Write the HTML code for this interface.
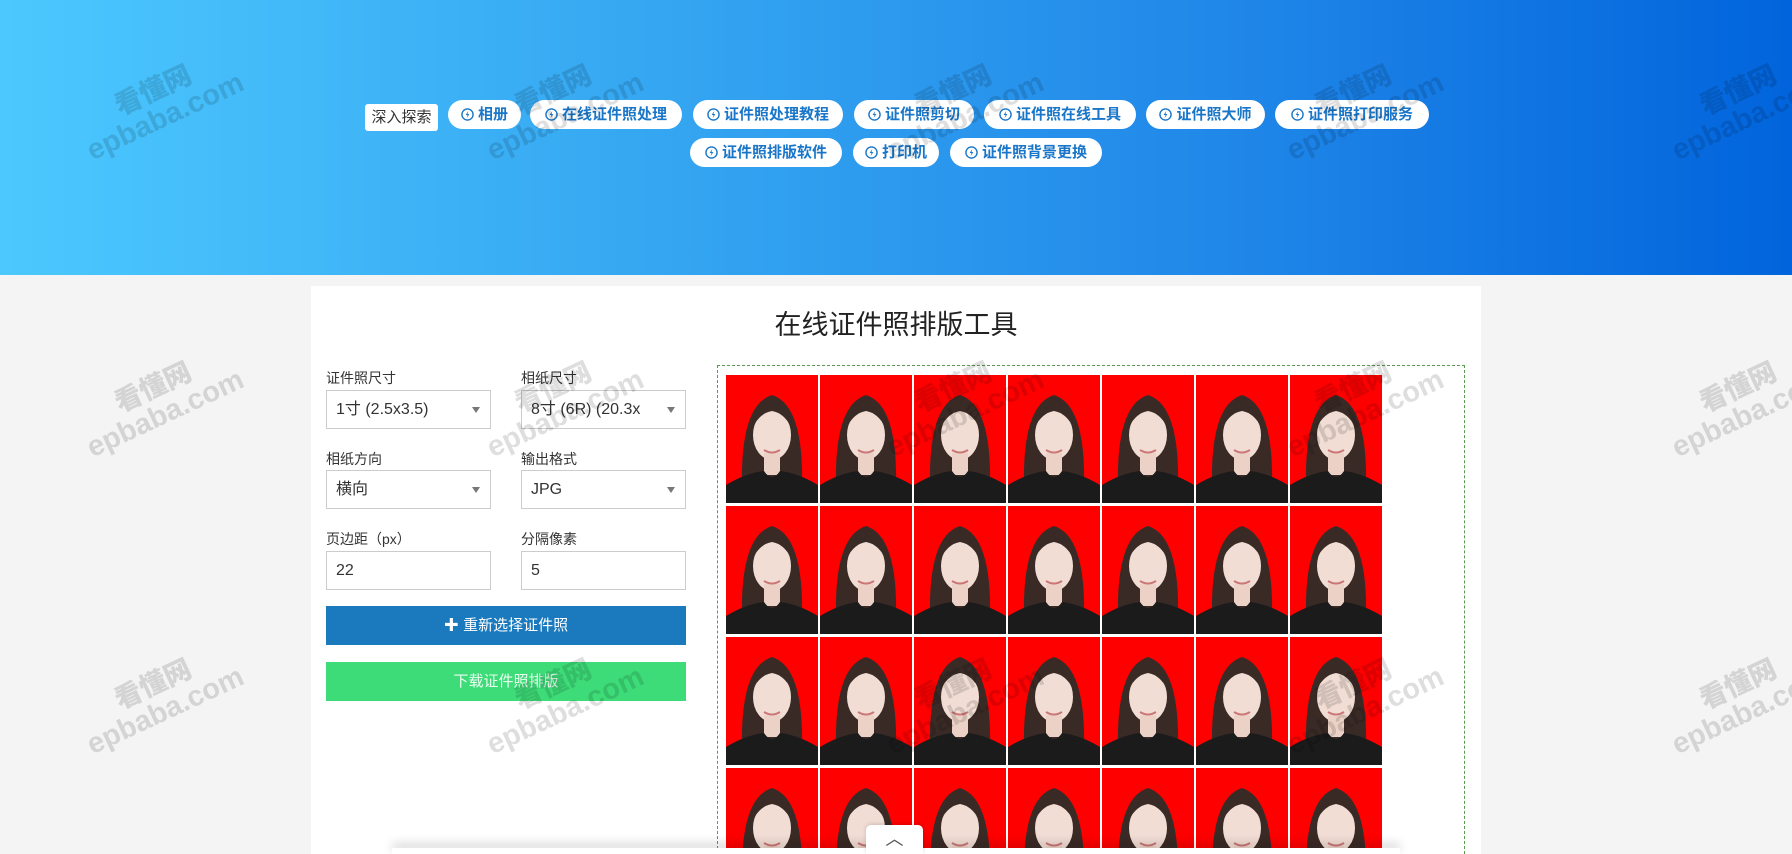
<!DOCTYPE html>
<html><head><meta charset="utf-8"><style>
*{box-sizing:border-box;margin:0;padding:0}
html{width:1792px;height:854px;overflow:hidden}
body{width:1792px;height:854px;overflow:hidden;background:#f4f4f4;font-family:"Liberation Sans","Noto Sans CJK SC",sans-serif;position:relative}
.hdr{position:absolute;left:0;top:0;width:1792px;height:275px;background:linear-gradient(90deg,#4cc8fe 0%,#36a8f2 35%,#1f86e8 70%,#0164dc 100%)}
.tag{position:absolute;height:29px;border-radius:15px;background:#fff;color:#1976c8;font-size:15px;font-weight:bold;line-height:29px;text-align:center;white-space:nowrap}
.tag svg{display:inline-block;width:13px;height:13px;margin-right:4px;vertical-align:-2px}
.lab{position:absolute;left:365px;top:104px;width:73px;height:27px;background:#fff;border-radius:3px;font-size:15px;line-height:27px;text-align:center;color:#333}
.card{position:absolute;left:311px;top:286px;width:1170px;height:568px;background:#fff}
h1{position:absolute;left:311px;width:1170px;top:303px;text-align:center;font-size:27px;font-weight:normal;color:#222}
.l{position:absolute;font-size:14px;color:#333}
.s{position:absolute;width:165px;height:39px;border:1px solid #ccc;font-size:16px;color:#333;line-height:37px;padding-left:9px;background:#fff}
.s.d:after{content:"";position:absolute;right:10px;top:16px;border:4px solid transparent;border-top:6px solid #777}
.btn{position:absolute;left:326px;width:360px;height:39px;color:#fff;font-size:15px;line-height:39px;text-align:center}
.prev{position:absolute;left:717px;top:365px;width:748px;height:489px;border:1px dashed #5a9a50;border-bottom:none}
.wm{position:absolute;color:rgba(0,0,0,.13);font-weight:bold;transform:rotate(-25deg);text-align:center;line-height:1.05}
.wm b{display:block;font-size:27px}.wm span{display:block;font-size:29px}
.bar{position:absolute;left:392px;top:848px;width:1008px;height:6px;background:#fff;box-shadow:0 -4px 10px rgba(0,0,0,.2)}
.up{position:absolute;left:866px;top:825px;width:57px;height:29px;background:#fff;border-radius:5px 5px 0 0;box-shadow:0 -1px 4px rgba(0,0,0,.15);text-align:center;color:#555;font-size:18px;line-height:28px}
</style></head><body>
<svg width="0" height="0" style="position:absolute"><defs><symbol id="ic" viewBox="0 0 14 14"><circle cx="7" cy="7" r="6" fill="none" stroke="#1976c8" stroke-width="1.5"/><path d="M7.8 3.2 L5 7.6 H7 L6.2 10.8 L9 6.4 H7 Z" fill="#1976c8"/></symbol></defs></svg>
<div class="hdr"></div>
<div class="lab">深入探索</div>
<div class="tag" style="left:448px;top:100px;width:73px"><svg><use href="#ic"/></svg>相册</div>
<div class="tag" style="left:530px;top:100px;width:152px"><svg><use href="#ic"/></svg>在线证件照处理</div>
<div class="tag" style="left:693px;top:100px;width:150px"><svg><use href="#ic"/></svg>证件照处理教程</div>
<div class="tag" style="left:854px;top:100px;width:120px"><svg><use href="#ic"/></svg>证件照剪切</div>
<div class="tag" style="left:984px;top:100px;width:152px"><svg><use href="#ic"/></svg>证件照在线工具</div>
<div class="tag" style="left:1146px;top:100px;width:119px"><svg><use href="#ic"/></svg>证件照大师</div>
<div class="tag" style="left:1275px;top:100px;width:154px"><svg><use href="#ic"/></svg>证件照打印服务</div>
<div class="tag" style="left:690px;top:138px;width:152px"><svg><use href="#ic"/></svg>证件照排版软件</div>
<div class="tag" style="left:853px;top:138px;width:86px"><svg><use href="#ic"/></svg>打印机</div>
<div class="tag" style="left:950px;top:138px;width:152px"><svg><use href="#ic"/></svg>证件照背景更换</div>

<div class="card"></div>
<h1>在线证件照排版工具</h1>
<div class="l" style="left:326px;top:368px">证件照尺寸</div>
<div class="l" style="left:521px;top:368px">相纸尺寸</div>
<div class="s d" style="left:326px;top:390px">1寸 (2.5x3.5)</div>
<div class="s d" style="left:521px;top:390px">8寸 (6R) (20.3x</div>
<div class="l" style="left:326px;top:449px">相纸方向</div>
<div class="l" style="left:521px;top:449px">输出格式</div>
<div class="s d" style="left:326px;top:470px">横向</div>
<div class="s d" style="left:521px;top:470px">JPG</div>
<div class="l" style="left:326px;top:529px">页边距（px）</div>
<div class="l" style="left:521px;top:529px">分隔像素</div>
<div class="s" style="left:326px;top:551px">22</div>
<div class="s" style="left:521px;top:551px">5</div>
<div class="btn" style="top:606px;background:#1a7abd">✚ 重新选择证件照</div>
<div class="btn" style="top:662px;background:#3ddc78;color:#e8fff0">下载证件照排版</div>

<div class="prev"></div>
<svg style="position:absolute;left:726px;top:375px" width="658" height="479">
<defs><pattern id="p" width="94" height="131" patternUnits="userSpaceOnUse">
<rect width="92" height="128" fill="#fe0000"/>
<path d="M16 112 Q14 30 46 20 Q78 30 76 112 Z" fill="#3a2a26"/>
<ellipse cx="46" cy="60" rx="19" ry="25" fill="#f1ddd4"/>
<rect x="38" y="78" width="16" height="22" fill="#ecd2c6"/>
<path d="M0 128 L0 110 Q20 98 38 96 Q46 108 54 96 Q72 98 92 110 L92 128 Z" fill="#1b1b1b"/>
<path d="M27 52 Q30 30 46 28 Q62 30 65 52 Q58 38 46 36 Q34 38 27 52Z" fill="#3a2a26"/>
<path d="M38 75 Q46 80 54 75" stroke="#c77" stroke-width="2" fill="none"/>
</pattern></defs>
<rect width="658" height="479" fill="url(#p)"/>
</svg>

<div class="wm" style="left:75px;top:75px"><b>看懂网</b><span>epbaba.com</span></div>
<div class="wm" style="left:475px;top:75px"><b>看懂网</b><span>epbaba.com</span></div>
<div class="wm" style="left:875px;top:75px"><b>看懂网</b><span>epbaba.com</span></div>
<div class="wm" style="left:1275px;top:75px"><b>看懂网</b><span>epbaba.com</span></div>
<div class="wm" style="left:1660px;top:75px"><b>看懂网</b><span>epbaba.com</span></div>
<div class="wm" style="left:75px;top:372px"><b>看懂网</b><span>epbaba.com</span></div>
<div class="wm" style="left:475px;top:372px"><b>看懂网</b><span>epbaba.com</span></div>
<div class="wm" style="left:875px;top:372px"><b>看懂网</b><span>epbaba.com</span></div>
<div class="wm" style="left:1275px;top:372px"><b>看懂网</b><span>epbaba.com</span></div>
<div class="wm" style="left:1660px;top:372px"><b>看懂网</b><span>epbaba.com</span></div>
<div class="wm" style="left:75px;top:669px"><b>看懂网</b><span>epbaba.com</span></div>
<div class="wm" style="left:475px;top:669px"><b>看懂网</b><span>epbaba.com</span></div>
<div class="wm" style="left:875px;top:669px"><b>看懂网</b><span>epbaba.com</span></div>
<div class="wm" style="left:1275px;top:669px"><b>看懂网</b><span>epbaba.com</span></div>
<div class="wm" style="left:1660px;top:669px"><b>看懂网</b><span>epbaba.com</span></div>

<div class="bar"></div>
<div class="up">︿</div>
</body></html>
